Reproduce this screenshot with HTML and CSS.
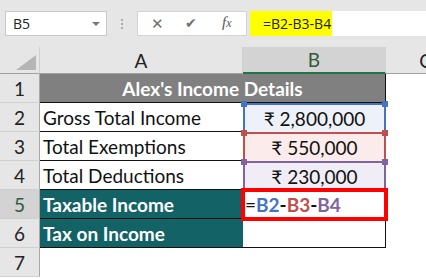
FILE: index.html
```html
<!DOCTYPE html>
<html>
<head>
    <title>Alex's Income Details</title>
    <meta charset="utf-8" />
    <link rel="stylesheet" href="styles.css">
</head>
<body>
    <div class="toolbar">
        <div class="namebox"><span>B5</span><span class="arrow"></span></div>
        <div class="dots"><i></i><i></i><i></i></div>
        <div class="fxbox">
            <span class="cancel">&#x2715;</span>
            <span class="enter">&#x2714;</span>
            <span class="fx"><i>f</i><i>x</i></span>
        </div>
        <div class="formula"><span class="hl">=B2-B3-B4</span></div>
    </div>

    <div class="sheet">
        <!-- column headers -->
        <div class="corner"><span class="tri"></span></div>
        <div class="colhead">A</div>
        <div class="colhead sel">B</div>
        <div class="colhead">C</div>

        <!-- row 1 -->
        <div class="rowhead">1</div>
        <div class="cell title">Alex's Income Details</div>
        <div class="cell blank"></div>

        <!-- row 2 -->
        <div class="rowhead">2</div>
        <div class="cell label">Gross Total Income</div>
        <div class="cell val ref-blue">&#x20B9; 2,800,000<span class="h hl-l"></span><span class="h hl-r"></span></div>
        <div class="cell blank"></div>

        <!-- row 3 -->
        <div class="rowhead">3</div>
        <div class="cell label">Total Exemptions</div>
        <div class="cell val ref-red">&#x20B9; 550,000<span class="h hl-l"></span><span class="h hl-r"></span></div>
        <div class="cell blank"></div>

        <!-- row 4 -->
        <div class="rowhead">4</div>
        <div class="cell label">Total Deductions</div>
        <div class="cell val ref-purple">&#x20B9; 230,000<span class="h hl-l"></span><span class="h hl-r"></span></div>
        <div class="cell blank"></div>

        <!-- row 5 -->
        <div class="rowhead sel">5</div>
        <div class="cell teal">Taxable Income</div>
        <div class="cell active">=<b class="c-blue">B2</b><b>-</b><b class="c-red">B3</b><b>-</b><b class="c-purple">B4</b></div>
        <div class="cell blank"></div>

        <!-- row 6 -->
        <div class="rowhead">6</div>
        <div class="cell teal">Tax on Income</div>
        <div class="cell empty"></div>
        <div class="cell blank"></div>

        <!-- row 7 -->
        <div class="rowhead">7</div>
        <div class="cell blank"></div>
        <div class="cell blank"></div>
        <div class="cell blank"></div>
    </div>
</body>
</html>
```

FILE: styles.css
```css
body {
    margin: 0;
    font-family: Lato, "Open Sans", sans-serif;
    background-color: white;
    overflow: hidden;
}

/* formula bar */
.toolbar {
    height: 47px;
    background-color: #e6e6e6;
    display: flex;
    align-items: flex-start;
    padding-top: 11px;
    box-sizing: border-box;
}

.namebox {
    margin-left: 5px;
    width: 102px;
    height: 25px;
    box-sizing: border-box;
    background-color: white;
    border: 1px solid #c8c8c8;
    display: flex;
    align-items: center;
    justify-content: space-between;
    padding: 0 6px 0 7px;
    font-family: "Open Sans", sans-serif;
    font-size: 14px;
    color: #222;
}

.arrow {
    width: 0;
    height: 0;
    border-left: 4px solid transparent;
    border-right: 4px solid transparent;
    border-top: 4px solid #777;
}

.dots {
    width: 30px;
    height: 25px;
    display: flex;
    flex-direction: column;
    align-items: center;
    justify-content: center;
    gap: 2px;
}

.dots i {
    width: 2px;
    height: 2px;
    background-color: #aaa;
}

.fxbox {
    width: 110px;
    height: 25px;
    box-sizing: border-box;
    background-color: white;
    border: 1px solid #d4d4d4;
    position: relative;
    color: #666;
}

.fxbox span {
    position: absolute;
    top: 2px;
}

.cancel {
    left: 13px;
    font-size: 15px;
    color: #6f6f6f;
}

.enter {
    left: 47px;
    font-size: 14px;
    color: #6f6f6f;
}

.fx {
    left: 84px;
    font-family: "Liberation Serif", serif;
    font-size: 15px;
    color: #555;
}

.fx i:last-child {
    font-size: 12px;
}

.formula {
    margin-left: 3px;
    flex: 1;
    height: 25px;
    background-color: white;
}

.formula .hl {
    display: inline-block;
    width: 82px;
    height: 25px;
    line-height: 25px;
    box-sizing: border-box;
    padding-left: 13px;
    background-color: #ffff00;
    font-family: "Open Sans", sans-serif;
    font-size: 14px;
    color: #222;
}

/* grid */
.sheet {
    display: grid;
    grid-template-columns: 40px 203px 143px 80px;
    grid-template-rows: 27px repeat(7, 29px);
}

.corner {
    background-color: #e6e6e6;
    border-right: 1px solid #cfcfcf;
    border-bottom: 1px solid #a0a0a0;
    box-sizing: border-box;
    position: relative;
}

.tri {
    position: absolute;
    right: 3px;
    bottom: 3px;
    width: 0;
    height: 0;
    border-left: 20px solid transparent;
    border-bottom: 15px solid #b5b5b5;
}

.colhead {
    background-color: #e6e6e6;
    border-right: 1px solid #d0d0d0;
    border-bottom: 1px solid #a0a0a0;
    box-sizing: border-box;
    text-align: center;
    font-size: 19px;
    line-height: 27px;
    color: #222;
}

.colhead.sel {
    background-color: #d3d3d3;
    border-bottom: 2px solid #217346;
    color: #2e5b3c;
    line-height: 26px;
}

.rowhead {
    background-color: #e6e6e6;
    border-right: 1px solid #a8a8a8;
    border-bottom: 1px solid #d0d0d0;
    box-sizing: border-box;
    text-align: center;
    font-size: 19px;
    line-height: 29px;
    color: #222;
}

.rowhead.sel {
    background-color: #d3d3d3;
    color: #2e5b3c;
}

.cell {
    box-sizing: border-box;
    font-size: 19px;
    line-height: 29px;
    white-space: nowrap;
    color: #111;
    position: relative;
}

.title {
    grid-column: span 2;
    background-color: #808080;
    color: white;
    font-weight: bold;
    text-align: center;
    border-right: 1px solid #111;
    border-bottom: 1px solid #111;
}

.label {
    padding-left: 3px;
    border-bottom: 1px solid #111;
}

.val {
    text-align: center;
    border: 2px solid;
    border-bottom: none;
    line-height: 27px;
}

.ref-blue {
    border-color: #4472c4;
    background-color: #edf2fa;
}

.ref-red {
    border-color: #c0504d;
    background-color: #fbeceb;
}

.ref-purple {
    border-color: #8064a2;
    background-color: #f1edf6;
}

.h {
    position: absolute;
    top: -4px;
    width: 6px;
    height: 6px;
}

.ref-blue .h { background-color: #4472c4; }
.ref-red .h { background-color: #c0504d; }
.ref-purple .h { background-color: #8064a2; }

.hl-l { left: -4px; }
.hl-r { right: -4px; }

.teal {
    background-color: #126266;
    color: white;
    font-weight: bold;
    padding-left: 3px;
    border-bottom: 1px solid #111;
}

.active {
    z-index: 2;
    outline: 4px solid #ff0000;
    outline-offset: -2px;
    padding-left: 2px;
}

.active b { font-weight: bold; color: #111; }
.c-blue { color: #4472c4 !important; }
.c-red { color: #c0504d !important; }
.c-purple { color: #8064a2 !important; }

.empty {
    border-right: 1px solid #111;
    border-bottom: 1px solid #111;
}
```
